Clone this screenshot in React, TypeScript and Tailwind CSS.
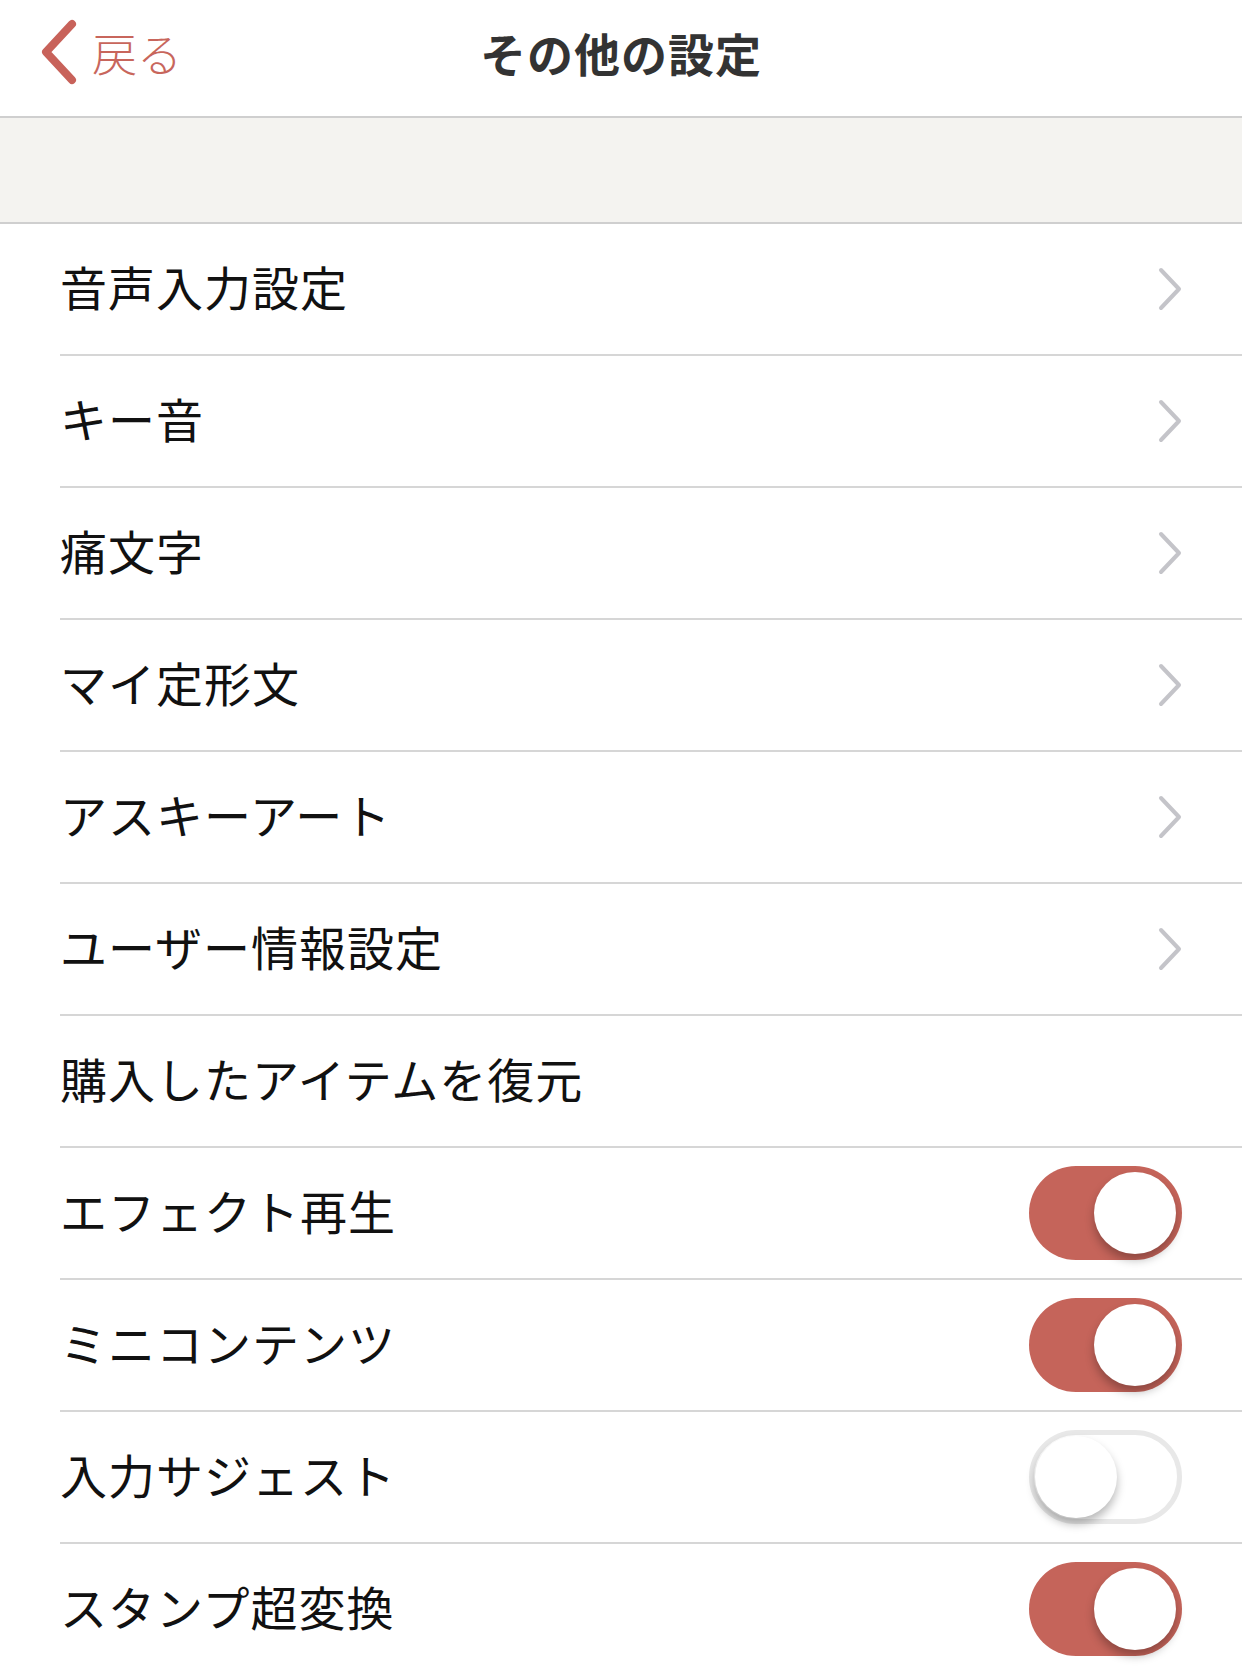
import React from "react";

type Row = { label: string; kind: "link" | "plain" | "toggle"; on?: boolean };

const rows: Row[] = [
  { label: "音声入力設定", kind: "link" },
  { label: "キー音", kind: "link" },
  { label: "痛文字", kind: "link" },
  { label: "マイ定形文", kind: "link" },
  { label: "アスキーアート", kind: "link" },
  { label: "ユーザー情報設定", kind: "link" },
  { label: "購入したアイテムを復元", kind: "plain" },
  { label: "エフェクト再生", kind: "toggle", on: true },
  { label: "ミニコンテンツ", kind: "toggle", on: true },
  { label: "入力サジェスト", kind: "toggle", on: false },
  { label: "スタンプ超変換", kind: "toggle", on: true },
];

function Chevron() {
  return (
    <svg width="24" height="44" viewBox="0 0 24 44" fill="none">
      <path d="M3 3 L21 22 L3 41" stroke="#c4c4c9" strokeWidth="4" strokeLinecap="round" strokeLinejoin="round" />
    </svg>
  );
}

function Toggle({ on }: { on: boolean }) {
  return (
    <div
      className={`flex h-[94px] w-[153px] items-center rounded-full ${
        on
          ? "justify-end bg-[#c5645a] px-[6px]"
          : "justify-start border-[5px] border-[#e8e8e8] bg-white px-[1px]"
      }`}
    >
      <div className="h-[82px] w-[82px] rounded-full bg-white shadow-[0_6px_10px_rgba(0,0,0,0.28)]" />
    </div>
  );
}

export default function App() {
  return (
    <div
      className="min-h-[1674px] w-[1242px] overflow-hidden bg-white"
      style={{ fontFamily: '"Noto Sans CJK JP", "Noto Sans", sans-serif' }}
    >
      <header className="grid h-[118px] grid-cols-[1fr_auto_1fr] items-center border-b-2 border-[#cfcfcf] bg-white">
        <div className="flex items-center gap-[14px] pl-[38px] pb-[12px]">
          <svg width="40" height="66" viewBox="0 0 40 66" fill="none">
            <path d="M34 5 L8 33 L34 61" stroke="#c8625a" strokeWidth="8" strokeLinecap="round" strokeLinejoin="round" />
          </svg>
          <span className="text-[45px] font-light leading-none text-[#c8665c]">戻る</span>
        </div>
        <h1 className="pb-[12px] text-[46px] font-bold leading-none tracking-[1px] text-[#333333]">その他の設定</h1>
        <div />
      </header>
      <div className="h-[106px] border-b-2 border-[#cfcfcf] bg-[#f4f3f0]" />
      <ul>
        {rows.map((r) => (
          <li key={r.label} className="h-[132px] pl-[60px]">
            <div className="flex h-full items-center justify-between border-b-2 border-[#d6d6d6] pr-[60px]">
              <span className="pb-[8px] text-[47px] leading-none tracking-[1px] text-[#111111]">{r.label}</span>
              {r.kind === "link" && <Chevron />}
              {r.kind === "toggle" && <Toggle on={!!r.on} />}
            </div>
          </li>
        ))}
      </ul>
    </div>
  );
}
